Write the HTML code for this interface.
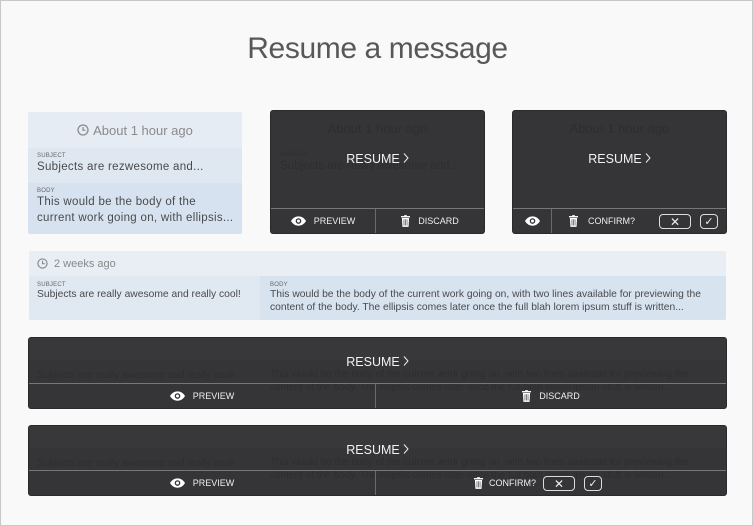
<!DOCTYPE html>
<html><head><meta charset="utf-8"><style>
*{margin:0;padding:0;box-sizing:border-box}
body{width:753px;height:526px;background:#f9f9f9;font-family:"Liberation Sans",sans-serif;position:relative;overflow:hidden;border:1px solid #c8c8c8}
.abs{position:absolute}
h1{position:absolute;top:31px;left:0;width:753px;text-align:center;font-weight:normal;font-size:30px;color:#58585a;letter-spacing:-0.4px}
.card{position:absolute;overflow:hidden;border-radius:2px}
.lbl{font-size:6px;color:#666;text-transform:uppercase;letter-spacing:.2px}
.txt{font-size:11.5px;color:#4a4a4c;line-height:16px}
.dark{background:#353538;box-shadow:0 0 0 1px #2a2a2c}
.dark .lbl,.dark .txt,.dark .hd{color:#2e2e30!important}
.hd{color:#888;font-size:13px}
.res{position:absolute;color:#f2f2f2;font-size:12.5px;width:100%;text-align:center}
.bar{position:absolute;left:0;right:0;bottom:0;border-top:1px solid #777;color:#eee;font-size:9px}
.btn{position:absolute;top:0;height:100%;display:flex;align-items:center;justify-content:center;gap:8px}
.vl{position:absolute;top:0;height:100%;width:1px;background:#6a6a6a}
.ob{position:absolute;border:1.3px solid #ddd;border-radius:4px;color:#eee;display:flex;align-items:center;justify-content:center}
.chev{display:inline-block;vertical-align:0px;margin-left:3px}
</style></head><body>
<svg width="0" height="0" style="position:absolute"><defs>
<symbol id="eye" viewBox="0 0 16 10"><path d="M0 5C2 1.5 5 0 8 0s6 1.5 8 5c-2 3.5-5 5-8 5S2 8.5 0 5z" fill="#fff"/><circle cx="8" cy="5" r="3" fill="#353538"/><circle cx="8" cy="5" r="1.6" fill="#fff"/></symbol>
<symbol id="trash" viewBox="0 0 10 13"><rect x="0" y="1" width="10" height="1.5" fill="#fff"/><rect x="3.5" y="0" width="3" height="1.5" fill="#fff"/><path d="M1 3.2h8l-.6 9.8H1.6z" fill="#fff"/><path d="M3.3 4.5v7M5 4.5v7M6.7 4.5v7" stroke="#353538" stroke-width=".7"/></symbol>
<symbol id="clock" viewBox="0 0 12 12"><circle cx="6" cy="6" r="5" fill="none" stroke="currentColor" stroke-width="1.3"/><path d="M6 3v3.2h2.5" fill="none" stroke="currentColor" stroke-width="1.2"/></symbol>
<symbol id="chev" viewBox="0 0 6 10"><path d="M1 0.5L5 5 1 9.5" fill="none" stroke="#eee" stroke-width="1"/></symbol>
</defs></svg>
<h1>Resume a message</h1>

<div class="card" style="left:27px;top:111px;width:214px;height:122px">
 <div class="abs hd" style="left:0;top:0;width:214px;height:36px;background:#e6ecf4;display:flex;align-items:center;justify-content:center;gap:4px;color:#8a8a8c"><svg width="12" height="12" style="color:#8a8a8c"><use href="#clock"/></svg>About 1 hour ago</div>
 <div class="abs" style="left:0;top:36px;width:214px;height:35px;background:#dfe7f1;padding:5px 9px"><div class="lbl">Subject</div><div class="txt" style="letter-spacing:.3px">Subjects are rezwesome and...</div></div>
 <div class="abs" style="left:0;top:71px;width:214px;height:51px;background:#d6e2ef;padding:5px 9px"><div class="lbl">Body</div><div class="txt" style="letter-spacing:.3px;width:200px">This would be the body of the current work going on, with ellipsis...</div></div>
</div>

<div class="card dark" style="left:270px;top:110px;width:213px;height:122px">
 <div class="abs hd" style="left:0;top:10px;width:213px;text-align:center">About 1 hour ago</div>
 <div class="abs" style="left:9px;top:41px"><div class="lbl">Subject</div><div class="txt">Subjects are really awesome and...</div></div>
 <div class="res" style="top:41px">RESUME<svg class="chev" width="6" height="10"><use href="#chev"/></svg></div>
 <div class="bar" style="height:25px">
  <div class="btn" style="left:0;width:104px"><svg width="15" height="10"><use href="#eye"/></svg>PREVIEW</div>
  <div class="vl" style="left:104px"></div>
  <div class="btn" style="left:105px;width:108px"><svg width="9" height="12"><use href="#trash"/></svg>DISCARD</div>
 </div>
</div>

<div class="card dark" style="left:512px;top:110px;width:213px;height:122px">
 <div class="abs hd" style="left:0;top:10px;width:213px;text-align:center">About 1 hour ago</div>
 <div class="res" style="top:41px">RESUME<svg class="chev" width="6" height="10"><use href="#chev"/></svg></div>
 <div class="bar" style="height:25px">
  <div class="btn" style="left:0;width:38px"><svg width="15" height="10"><use href="#eye"/></svg></div>
  <div class="vl" style="left:38px"></div>
  <div class="btn" style="left:56px;justify-content:flex-start;gap:10px"><svg width="9" height="12"><use href="#trash"/></svg>CONFIRM?</div>
  <div class="ob" style="left:146px;top:5px;width:32px;height:15px;font-size:12px">✕</div>
  <div class="ob" style="left:187px;top:5px;width:18px;height:15px;font-size:11px">✓</div>
 </div>
</div>

<div class="card" style="left:28px;top:250px;width:697px;height:69px">
 <div class="abs" style="left:0;top:0;width:697px;height:25px;background:#e9eef5;display:flex;align-items:center;gap:6px;padding-left:8px;font-size:11px;color:#888"><svg width="11" height="11" style="color:#888"><use href="#clock"/></svg>2 weeks ago</div>
 <div class="abs" style="left:0;top:25px;width:231px;height:44px;background:#e0e8f2;padding:6px 8px"><div class="lbl">Subject</div><div class="txt" style="font-size:10.3px;line-height:13px">Subjects are really awesome and really cool!</div></div>
 <div class="abs" style="left:231px;top:25px;width:466px;height:44px;background:#d8e3f0;padding:6px 10px"><div class="lbl">Body</div><div class="txt" style="font-size:10.3px;line-height:13px">This would be the body of the current work going on, with two lines available for previewing the content of the body. The ellipsis comes later once the full blah lorem ipsum stuff is written...</div></div>
</div>

<div class="card dark" style="left:28px;top:337px;width:697px;height:70px">
 <div class="abs" style="left:0;top:0;width:697px;height:22px;background:#38383b"></div>
 <div class="abs txt" style="left:8px;top:30px;font-size:10px">Subjects are really awesome and really cool!</div>
 <div class="abs txt" style="left:241px;top:30px;width:450px;font-size:10px;line-height:13px">This would be the body of the current work going on, with two lines available for previewing the content of the body. The ellipsis comes later once the full blah lorem ipsum stuff is written...</div>
 <div class="res" style="top:17px">RESUME<svg class="chev" width="6" height="10"><use href="#chev"/></svg></div>
 <div class="bar" style="height:25px">
  <div class="btn" style="left:0;width:346px"><svg width="15" height="10"><use href="#eye"/></svg>PREVIEW</div>
  <div class="vl" style="left:346px"></div>
  <div class="btn" style="left:347px;width:350px"><svg width="9" height="12"><use href="#trash"/></svg>DISCARD</div>
 </div>
</div>

<div class="card dark" style="left:28px;top:425px;width:697px;height:69px">
 <div class="abs" style="left:0;top:0;width:697px;height:22px;background:#38383b"></div>
 <div class="abs txt" style="left:8px;top:30px;font-size:10px">Subjects are really awesome and really cool!</div>
 <div class="abs txt" style="left:241px;top:30px;width:450px;font-size:10px;line-height:13px">This would be the body of the current work going on, with two lines available for previewing the content of the body. The ellipsis comes later once the full blah lorem ipsum stuff is written...</div>
 <div class="res" style="top:17px">RESUME<svg class="chev" width="6" height="10"><use href="#chev"/></svg></div>
 <div class="bar" style="height:25px">
  <div class="btn" style="left:0;width:346px"><svg width="15" height="10"><use href="#eye"/></svg>PREVIEW</div>
  <div class="vl" style="left:346px"></div>
  <div class="btn" style="left:445px;justify-content:flex-start;gap:6px"><svg width="9" height="12"><use href="#trash"/></svg>CONFIRM?</div>
  <div class="ob" style="left:514px;top:5px;width:32px;height:15px;font-size:12px">✕</div>
  <div class="ob" style="left:555px;top:5px;width:18px;height:15px;font-size:11px">✓</div>
 </div>
</div>
</body></html>
